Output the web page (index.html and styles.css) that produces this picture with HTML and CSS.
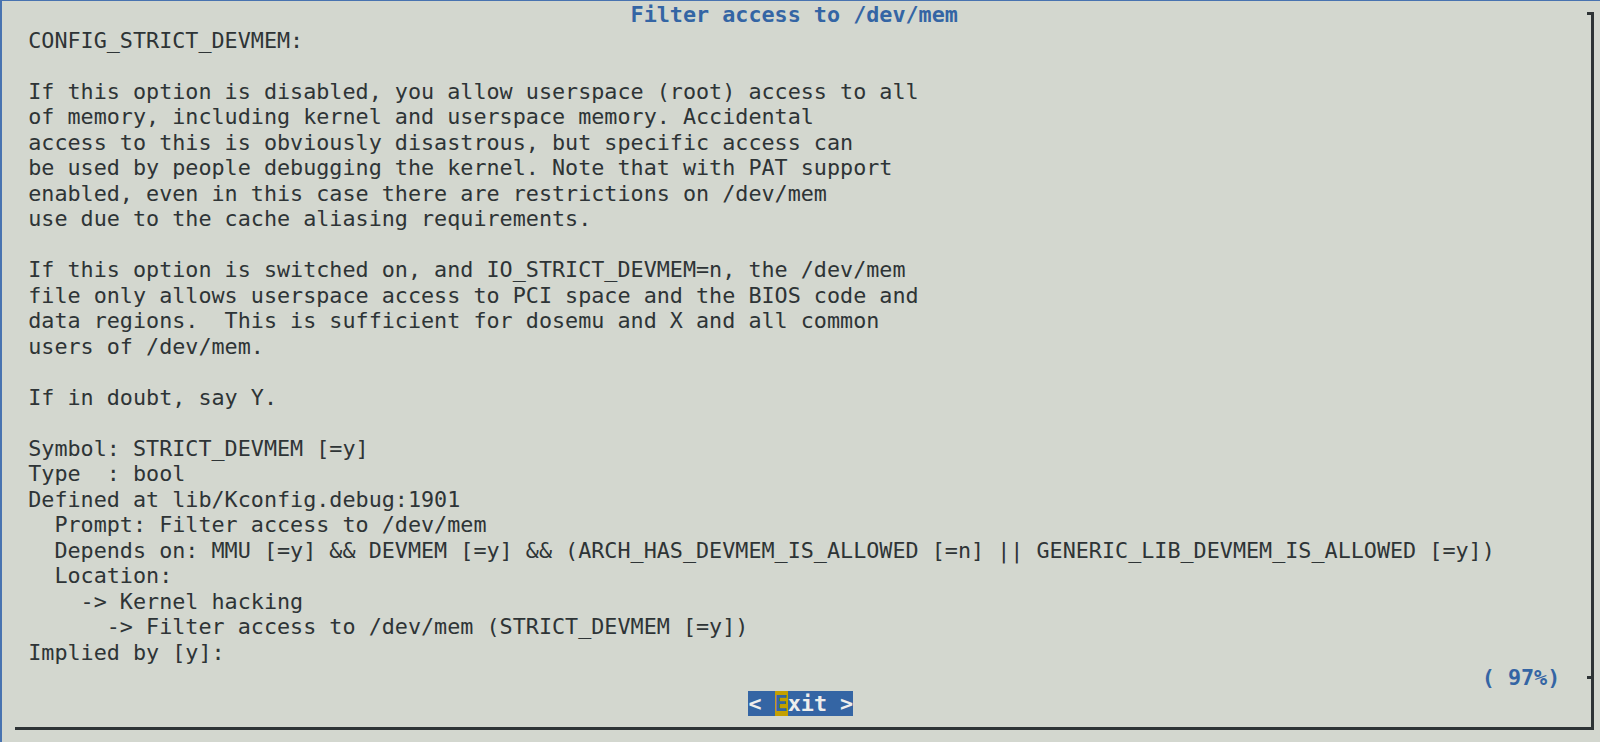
FILE: index.html
```html
<!DOCTYPE html>
<html>
<head>
<meta charset="utf-8">
<link rel="stylesheet" href="styles.css">
<title>Filter access to /dev/mem</title>
</head>
<body>
<div class="screen">
  <div class="dialog">
    <div class="row title"><span>Filter access to /dev/mem</span></div>
<pre class="text">CONFIG_STRICT_DEVMEM:

If this option is disabled, you allow userspace (root) access to all
of memory, including kernel and userspace memory. Accidental
access to this is obviously disastrous, but specific access can
be used by people debugging the kernel. Note that with PAT support
enabled, even in this case there are restrictions on /dev/mem
use due to the cache aliasing requirements.

If this option is switched on, and IO_STRICT_DEVMEM=n, the /dev/mem
file only allows userspace access to PCI space and the BIOS code and
data regions.  This is sufficient for dosemu and X and all common
users of /dev/mem.

If in doubt, say Y.

Symbol: STRICT_DEVMEM [=y]
Type  : bool
Defined at lib/Kconfig.debug:1901
  Prompt: Filter access to /dev/mem
  Depends on: MMU [=y] &amp;&amp; DEVMEM [=y] &amp;&amp; (ARCH_HAS_DEVMEM_IS_ALLOWED [=n] || GENERIC_LIB_DEVMEM_IS_ALLOWED [=y])
  Location:
    -&gt; Kernel hacking
      -&gt; Filter access to /dev/mem (STRICT_DEVMEM [=y])
Implied by [y]:</pre>
    <div class="row percent"><span>( 97%)</span></div>
    <div class="row buttons"><span class="btn">&lt; <span class="hot">E</span>xit &gt;</span></div>
  </div>
</div>
</body>
</html>
```

FILE: styles.css
```css
html, body {
  margin: 0;
  padding: 0;
  background: #d3d7cf;
}

.screen {
  width: 1600px;
  height: 742px;
  box-sizing: border-box;
  border-top: 1px solid #4873b0;
  border-left: 2px solid #4873b0;
  background: #d3d7cf;
  font-family: "DejaVu Sans Mono", "Liberation Mono", monospace;
  font-size: 21.76px;
  color: #2e3436;
  overflow: hidden;
}

.dialog {
  position: relative;
  margin-left: 1ch;
  margin-right: 6px;
  padding-top: 1px;
  padding-bottom: 11px;
  border-bottom: 3px solid #2e3436;
}

/* right edge of the box, starting at the middle of the title row */
.dialog::after {
  content: "";
  position: absolute;
  right: 0;
  top: 12px;
  bottom: -3px;
  width: 3px;
  background: #2e3436;
}

/* top-right corner piece */
.dialog::before {
  content: "";
  position: absolute;
  right: 0;
  top: 11px;
  width: 7px;
  height: 3px;
  background: #2e3436;
}

.row {
  height: 25.5px;
  line-height: 25.5px;
  white-space: pre;
}

.title {
  padding-left: 47ch;
  font-weight: bold;
  color: #3465a4;
}

.text {
  margin: 0;
  padding-left: 1ch;
  font: inherit;
  line-height: 25.5px;
  white-space: pre;
  color: #2e3436;
}

.percent {
  position: relative;
  padding-left: 112ch;
  font-weight: bold;
  color: #3465a4;
}

/* the tick on the right edge */
.percent::after {
  content: "";
  position: absolute;
  right: 0;
  top: 11px;
  width: 7px;
  height: 3px;
  background: #2e3436;
}

.buttons {
  padding-left: 56ch;
}

.btn {
  display: inline-block;
  height: 25.5px;
  background: #3465a4;
  color: #eeeeec;
  font-weight: bold;
}

.hot {
  background: #c4a000;
  color: #3465a4;
}
```
